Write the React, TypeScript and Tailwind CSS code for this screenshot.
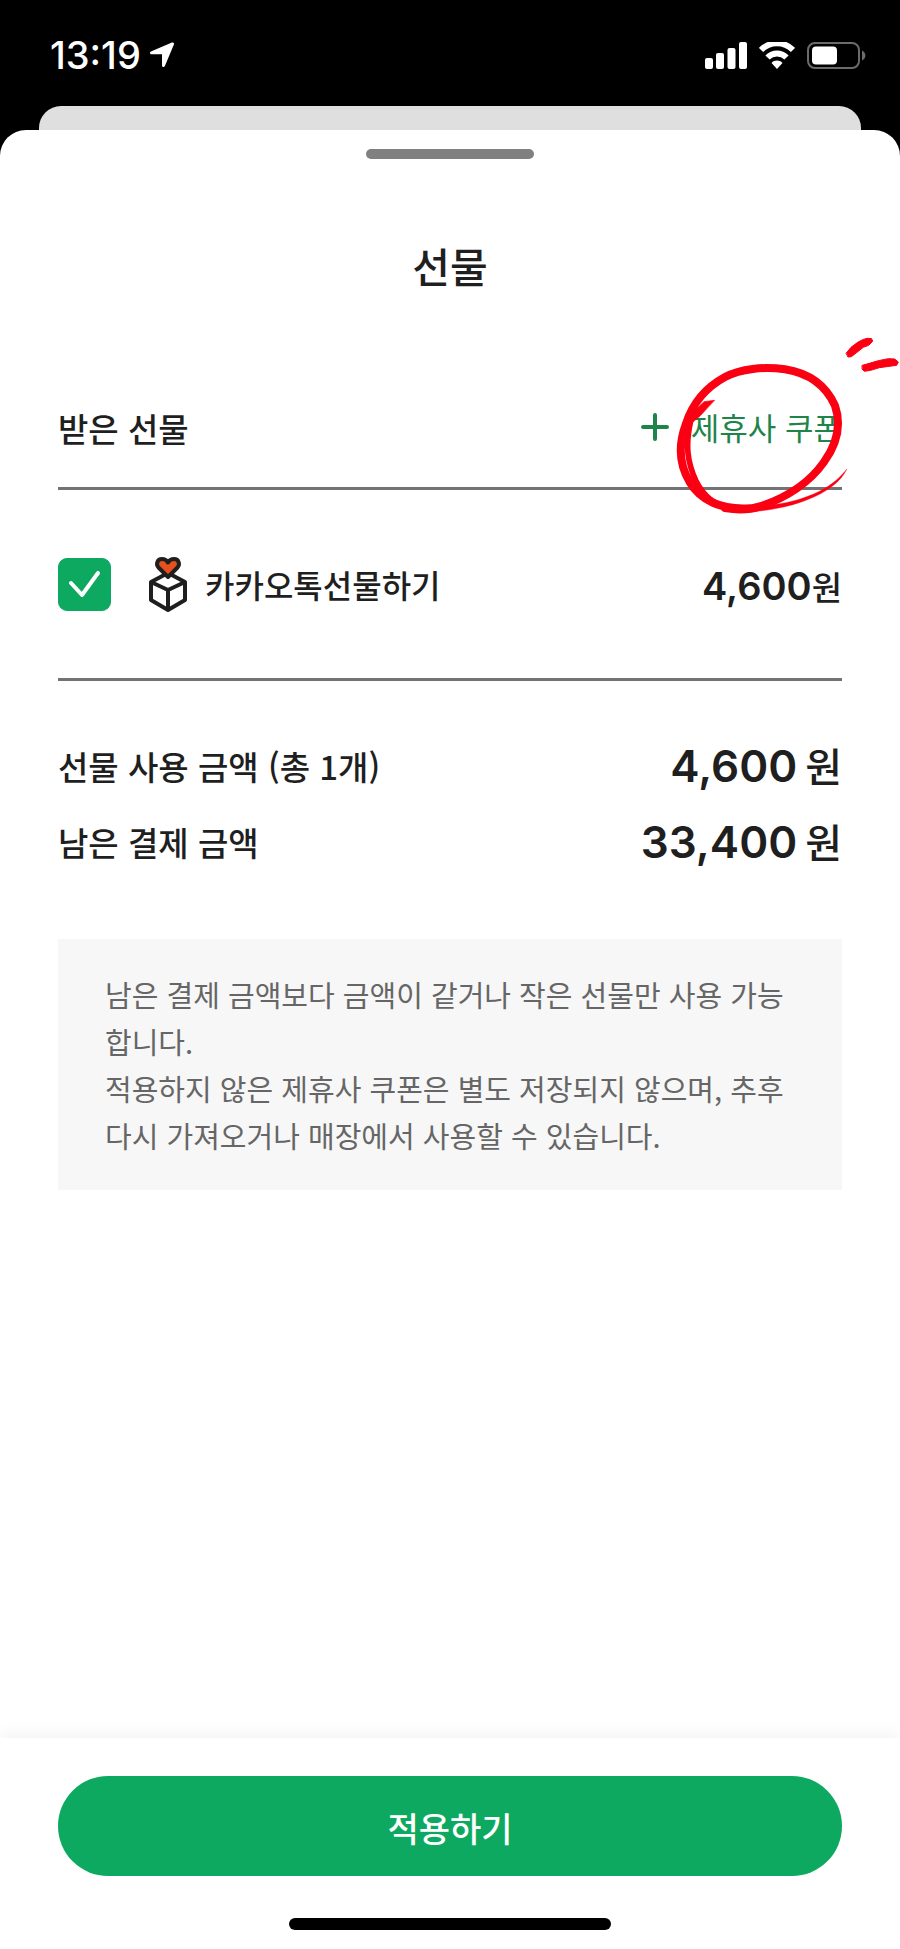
import { useState } from "react";

const KR = "font-['Noto_Sans_CJK_KR',sans-serif]";
const NUM = "font-[Inter,'Noto_Sans_CJK_KR',sans-serif]";

function StatusBar() {
  return (
    <div className="flex h-[106px] items-center justify-between bg-black pl-[50px] pr-[34px] text-white">
      <div className="flex items-center gap-2 pt-1">
        <span className="font-[Inter,sans-serif] text-[38px] leading-[44px] font-medium">13:19</span>
        <svg width="26" height="26" viewBox="0 0 26 26" fill="currentColor" stroke="currentColor" strokeLinejoin="round" aria-hidden="true">
          <path d="M23.500 2 2.500 10.800h10.800c.8 0 1.200.4 1.200 1.200v11.500Z" strokeWidth="3" />
        </svg>
      </div>
      <div className="flex items-center pt-1">
        <svg width="42" height="27" viewBox="0 0 42 27" fill="currentColor" aria-hidden="true">
          <rect x="0" y="16" width="8" height="11" rx="2" />
          <rect x="11" y="11" width="8" height="16" rx="2" />
          <rect x="22.500" y="6" width="8" height="21" rx="2" />
          <rect x="34" y="0" width="8" height="27" rx="2" />
        </svg>
        <svg className="ml-3" width="36" height="27" viewBox="0 0 36 27" fill="none" stroke="currentColor" aria-hidden="true">
          <path d="M2 8C11-1 25-1 34 8" strokeWidth="6" />
          <path d="M8.500 15.500C14 10 22 10 27.500 15.500" strokeWidth="6" />
          <path d="M18 27l-5.500-6c3-3.200 8-3.200 11 0Z" fill="currentColor" stroke="none" />
        </svg>
        <svg className="ml-3" width="59" height="27" viewBox="0 0 59 27" fill="none" aria-hidden="true">
          <rect x="1" y="1" width="51" height="25" rx="7" stroke="#6b6b6b" strokeWidth="2" />
          <rect x="5" y="4.500" width="25" height="18" rx="4" fill="#fff" />
          <path d="M55 8.500c4.500 2 4.500 8 0 10Z" fill="#6b6b6b" />
        </svg>
      </div>
    </div>
  );
}

function GiftIcon() {
  return (
    <svg width="38" height="55" viewBox="0 0 38 55" fill="none" stroke="#1f1f1f" strokeWidth="4" strokeLinejoin="round" aria-hidden="true">
      <path d="M19 16 2 25v18l17 10 17-10V25L19 16Z" />
      <path d="M2 25l17 8 17-8M19 33v20" />
      <path d="M19 20 9.500 10.500C6.500 7 8.500 2 12.800 2 16 2 18 3.500 19 5.500 20 3.500 22 2 25.200 2c4.300 0 6.300 5 3.300 8.500L19 20Z" fill="#e8501e" />
    </svg>
  );
}

// hand-drawn marker around the coupon link
function MarkerCircle() {
  return (
    <svg
      className="pointer-events-none absolute -right-[58px] -top-[89px]"
      width="280" height="220" viewBox="0 0 840 660"
      fill="none" stroke="#fb0012" strokeLinecap="round" strokeLinejoin="round" aria-hidden="true"
    >
      <path d="M390 592C300 598 240 565 210 515C178 463 173 405 198 338C218 276 260 228 315 198C362 173 430 166 495 175C570 187 620 228 645 284C666 345 650 400 612 453C570 513 500 560 420 586C385 598 350 597 315 591" strokeWidth="24" />
      <path d="M212 330C196 400 201 452 228 510C250 553 282 583 330 592" strokeWidth="17" />
      <path d="M283 268 252 272 212 310 205 345 240 315Z" fill="#fb0012" strokeWidth="2" />
      <path d="M680 475C665 510 620 545 560 567C510 588 430 603 350 605L385 587C470 585 540 570 600 540C635 522 660 500 680 475Z" fill="#fb0012" strokeWidth="1" />
      <path d="M679 126 693 109 713 94 728 86 741 82 755 83 758 91 746 103 730 109 711 124 694 137 685 138Z" fill="#fb0012" strokeWidth="3" />
      <path d="M727 163 748 157 775 149 805 143 824 144 835 153 830 163 800 167 778 170 752 178 733 181 727 175Z" fill="#fb0012" strokeWidth="3" />
    </svg>
  );
}

function SumRow({ label, amount }: { label: string; amount: string }) {
  return (
    <div className="flex h-[76px] items-center justify-between">
      <dt className="text-[33px] font-medium">{label}</dt>
      <dd className="flex items-baseline gap-2 font-medium">
        <span className={`${NUM} text-[44px] font-semibold`}>{amount}</span>
        <span className="text-[40px]">원</span>
      </dd>
    </div>
  );
}

export default function App() {
  const [checked, setChecked] = useState(true);

  return (
    <div className={`${KR} flex min-h-screen flex-col bg-black leading-none text-[#1f1f1f]`} lang="ko">
      <StatusBar />
      <div className="mx-[39px] h-6 rounded-t-[22px] bg-[#dfdfdf]" />

      <main className="flex flex-1 flex-col rounded-t-[26px] bg-white">
        <div className="mx-auto mt-[19px] h-[10px] w-[168px] rounded-full bg-[#808080]" />
        <h1 className="mt-[81px] text-center text-[41px] leading-[50px] font-medium">선물</h1>

        <div className="px-[58px]">
          <div className="relative mt-[110px] flex h-[90px] items-start justify-between border-b-[3px] border-[#737373]">
            <h2 className="text-[33px] leading-[56px] font-medium">받은 선물</h2>
            <button type="button" className="flex cursor-pointer items-center gap-[22px] text-[31px] leading-[54px] text-[#1e8449]">
              <svg width="28" height="28" viewBox="0 0 28 28" stroke="currentColor" strokeWidth="4" strokeLinecap="round" aria-hidden="true">
                <path d="M14 2v24M2 14h24" />
              </svg>
              제휴사 쿠폰
            </button>
            <MarkerCircle />
          </div>

          <div className="flex h-[191px] items-center justify-between border-b-[3px] border-[#737373]">
            <label className="flex cursor-pointer items-center">
              <span className="grid size-[53px] place-items-center">
                <input
                  type="checkbox"
                  checked={checked}
                  onChange={() => setChecked((c) => !c)}
                  className="col-start-1 row-start-1 size-full appearance-none rounded-[9px] border border-[#0da960] bg-white checked:bg-[#0da960]"
                />
                {checked && (
                  <svg className="pointer-events-none z-10 col-start-1 row-start-1" width="31" height="26" viewBox="0 0 31 26" fill="none" stroke="#fff" strokeWidth="4" strokeLinecap="round" strokeLinejoin="round" aria-hidden="true">
                    <path d="M2 12l11 12L29 2" />
                  </svg>
                )}
              </span>
              <span className="ml-[38px]"><GiftIcon /></span>
              <span className="ml-[18px] text-[32px] font-medium">카카오톡선물하기</span>
            </label>
            <span className="flex items-baseline pt-1 font-medium">
              <span className={`${NUM} text-[38px] font-semibold`}>4,600</span>
              <span className="text-[33px]">원</span>
            </span>
          </div>

          <dl className="mt-[47px]">
            <SumRow label="선물 사용 금액 (총 1개)" amount="4,600" />
            <SumRow label="남은 결제 금액" amount="33,400" />
          </dl>

          <div className="mt-[59px] bg-[#f7f7f7] pt-8 pr-10 pb-[31px] pl-[47px] text-[29px] leading-[47px] text-[#666]">
            <p>남은 결제 금액보다 금액이 같거나 작은 선물만 사용 가능합니다.</p>
            <p>적용하지 않은 제휴사 쿠폰은 별도 저장되지 않으며, 추후 다시 가져오거나 매장에서 사용할 수 있습니다.</p>
          </div>
        </div>

        <footer className="mt-auto bg-white px-[58px] pt-[38px] pb-[19px] shadow-[0_-4px_16px_rgba(0,0,0,0.05)]">
          <button type="button" className="h-[100px] w-full cursor-pointer rounded-full bg-[#0da960] pt-1 text-[34px] font-medium text-white">
            적용하기
          </button>
          <div className="mx-auto mt-[42px] h-3 w-[322px] rounded-full bg-black" />
        </footer>
      </main>
    </div>
  );
}
